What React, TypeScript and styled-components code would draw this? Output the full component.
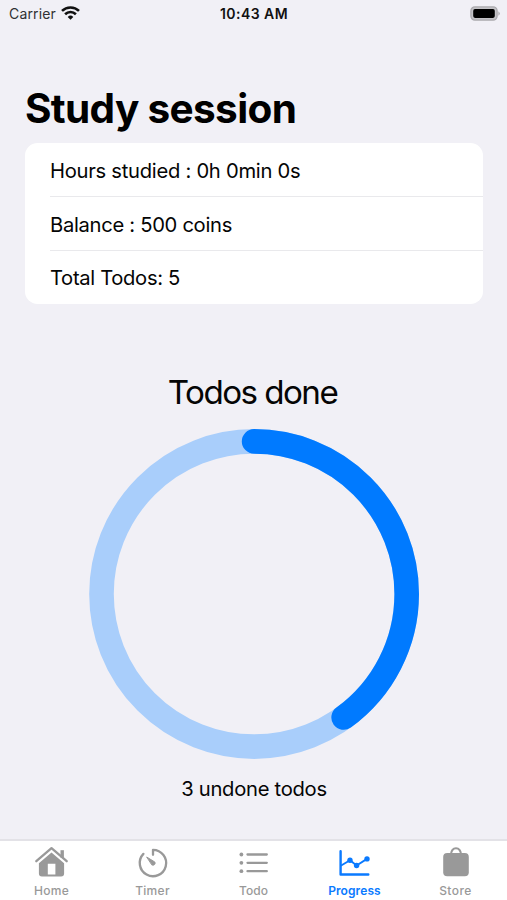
import React from "react";
import styled, { createGlobalStyle } from "styled-components";

const GlobalStyle = createGlobalStyle`
  * { box-sizing: border-box; }
  body { margin: 0; background: #f1f0f6; }
`;

const Screen = styled.div`
  display: flex;
  flex-direction: column;
  width: 507px;
  height: 900px;
  overflow: hidden;
  background: #f1f0f6;
  color: #050505;
  font-family: Inter, "Liberation Sans", sans-serif;
`;

const StatusBar = styled.header`
  display: grid;
  grid-template-columns: 1fr auto 1fr;
  align-items: center;
  height: 28px;
  padding: 0 6px 0 9px;
  font-size: 14px;
  line-height: 28px;
`;

const Carrier = styled.div`
  display: flex;
  align-items: center;
  gap: 5.5px;
  color: #303033;
  letter-spacing: 0.15px;
`;

const Clock = styled.div`
  margin-right: 2px;
  font-weight: 600;
  letter-spacing: 0.45px;
  color: #111;
`;

const Battery = styled.div`
  display: flex;
  justify-content: flex-end;
  align-items: center;
  height: 26px;
`;

const Title = styled.h1`
  margin: 56px 0 0 25px;
  height: 58.7px;
  line-height: 50px;
  font-size: 40.5px;
  font-weight: 700;
  letter-spacing: -0.65px;
  color: #000;
  white-space: nowrap;
`;

const Card = styled.section`
  margin: 0 24.5px 0 25px;
  height: 161px;
  padding-left: 25px;
  border-radius: 12.5px;
  background: #fff;
`;

const Row = styled.div`
  display: flex;
  align-items: center;
  height: 53.8px;
  padding-top: 1.5px;
  font-size: 20.2px;
  border-bottom: 1px solid #e9e9ec;
  &:first-child { height: 54.3px; }
  &:last-child { border-bottom: 0; padding-top: 0; height: 53px; }
`;

const RowText = styled.span<{ $spacing: number }>`
  letter-spacing: ${(p) => p.$spacing}px;
`;

const Summary = styled.main`
  display: flex;
  flex: 1;
  flex-direction: column;
  align-items: center;
  padding-top: 67.3px;
`;

const ChartTitle = styled.h2`
  margin: 0;
  padding-right: 2px;
  height: 54px;
  line-height: 42px;
  font-size: 33.2px;
  font-weight: 400;
  letter-spacing: -1.55px;
`;

const Ring = styled.svg`
  display: block;
  flex: none;
  width: 333px;
  height: 336px;
`;

const Caption = styled.p`
  margin: 15px 0 0;
  padding-left: 1px;
  line-height: 26px;
  font-size: 20.2px;
  letter-spacing: -0.27px;
`;

const TabBar = styled.nav`
  display: grid;
  flex: none;
  grid-template-columns: repeat(5, 1fr);
  height: 61px;
  padding: 0 1px;
  border-top: 2px solid #e3e2e7;
  background: #fff;
`;

const Tab = styled.div<{ $active?: boolean }>`
  display: flex;
  flex-direction: column;
  align-items: center;
  padding-top: 3px;
  color: ${(p) => (p.$active ? "#0a7aff" : "#999")};
  font-size: 12px;
  line-height: 16px;
`;

const TabIcon = styled.svg`
  width: 36px;
  height: 36px;
  margin-bottom: 3px;
  fill: none;
  stroke: currentColor;
  stroke-width: 2;
  stroke-linecap: round;
  stroke-linejoin: round;
`;

const TabLabel = styled.span<{ $spacing: number; $active?: boolean }>`
  letter-spacing: ${(p) => p.$spacing}px;
  font-weight: ${(p) => (p.$active ? 600 : 500)};
`;

const stats = [
  { text: "Hours studied : 0h 0min 0s", spacing: -0.27 },
  { text: "Balance : 500 coins", spacing: -0.3 },
  { text: "Total Todos: 5", spacing: -0.33 },
];

const tabs = [
  {
    label: "Home", spacing: 0.3,
    icon: <>
      <path d="M2.3 17.2 17.5 4.2 32.7 17.2" strokeWidth="2.3" />
      <path d="M28.2 6.2v7.5" strokeWidth="3.4" strokeLinecap="butt" />
      <path d="M17.5 8.6 30.1 19.2V29.5q0 3-3 3H7.9q-3 0-3-3V19.2ZM13.8 19.8v10.8h7.6V19.8Z" fill="currentColor" fillRule="evenodd" stroke="none" />
    </>,
  },
  {
    label: "Timer", spacing: 0.3,
    icon: <>
      <path d="M18 10.8V5.8A13.2 13.2 0 1 1 8.4 9.9" strokeWidth="2.3" />
      <path d="M12 13.2 19.8 18a2.1 2.1 0 0 1-2.7 3Z" fill="currentColor" strokeWidth="1" />
    </>,
  },
  {
    label: "Todo", spacing: 0.1,
    icon: <>
      <path d="M11.5 10.5h19.3M11.5 18.8h19.3M11.5 27.2h19.3" strokeWidth="2.3" />
      <g fill="currentColor" stroke="none"><circle cx="5.4" cy="10.5" r="1.9" /><circle cx="5.4" cy="18.8" r="1.9" /><circle cx="5.4" cy="27.2" r="1.9" /></g>
    </>,
  },
  {
    label: "Progress", spacing: 0.1, active: true,
    icon: <>
      <path d="M3.6 7.3v23.2h27.7" strokeWidth="2.4" />
      <path d="M4.6 21.3 13 16.2 19.6 21.5 30 14.9" strokeWidth="1.9" />
      <g fill="currentColor" stroke="none"><circle cx="13" cy="16.2" r="2.7" /><circle cx="19.6" cy="21.5" r="2.7" /><circle cx="30" cy="14.9" r="2.7" /></g>
    </>,
  },
  {
    label: "Store", spacing: 0.45,
    icon: <>
      <path d="M12.8 10.8C13.2 6.8 15 4.2 18 4.2s4.8 2.6 5.2 6.6" strokeWidth="2.1" />
      <rect x="5.2" y="8.9" width="25.6" height="23.4" rx="4" fill="currentColor" stroke="none" />
    </>,
  },
];

const radius = 152.6;
const circumference = 2 * Math.PI * radius;
const completed = 0.4;

export default function App() {
  return (
    <Screen>
      <GlobalStyle />
      <StatusBar>
        <Carrier>
          Carrier
          <svg width="19" height="16" viewBox="0 0 19 16" fill="none" stroke="#111" strokeWidth="2.6">
            <path d="M1 4.9a12.2 12.2 0 0 1 17 0M4.1 8.2a7.8 7.8 0 0 1 10.8 0" />
            <path d="m6.7 10.9 2.8 2.9 2.8-2.9a4 4 0 0 0-5.6 0Z" fill="#111" stroke="none" />
          </svg>
        </Carrier>
        <Clock>10:43 AM</Clock>
        <Battery>
          <svg width="31" height="16" viewBox="0 0 31 16">
            <rect x=".9" y=".9" width="26.2" height="13.2" rx="4" fill="#c4c3c7" stroke="#aaa9ad" strokeWidth="1.3" />
            <rect x="3.2" y="3.1" width="21.6" height="8.8" rx="1.8" fill="#000" />
            <path d="M28.4 5.2q2.8 2.3 0 4.6Z" fill="#aaa9ad" />
          </svg>
        </Battery>
      </StatusBar>
      <Title>Study session</Title>
      <Card>
        {stats.map((s) => <Row key={s.text}><RowText $spacing={s.spacing}>{s.text}</RowText></Row>)}
      </Card>
      <Summary>
        <ChartTitle>Todos done</ChartTitle>
        <Ring viewBox="0 0 333 336" fill="none" strokeWidth="24.6">
          <circle cx="167.1" cy="169" r={radius} stroke="#a9cefb" />
          <circle cx="167.1" cy="169" r={radius} stroke="#007aff" strokeLinecap="round" strokeDasharray={`${circumference * completed} ${circumference}`} transform="rotate(-90 167.1 169)" />
        </Ring>
        <Caption>3 undone todos</Caption>
      </Summary>
      <TabBar>
        {tabs.map((t) => (
          <Tab key={t.label} $active={t.active}>
            <TabIcon viewBox="0 0 36 36">{t.icon}</TabIcon>
            <TabLabel $spacing={t.spacing} $active={t.active}>{t.label}</TabLabel>
          </Tab>
        ))}
      </TabBar>
    </Screen>
  );
}
